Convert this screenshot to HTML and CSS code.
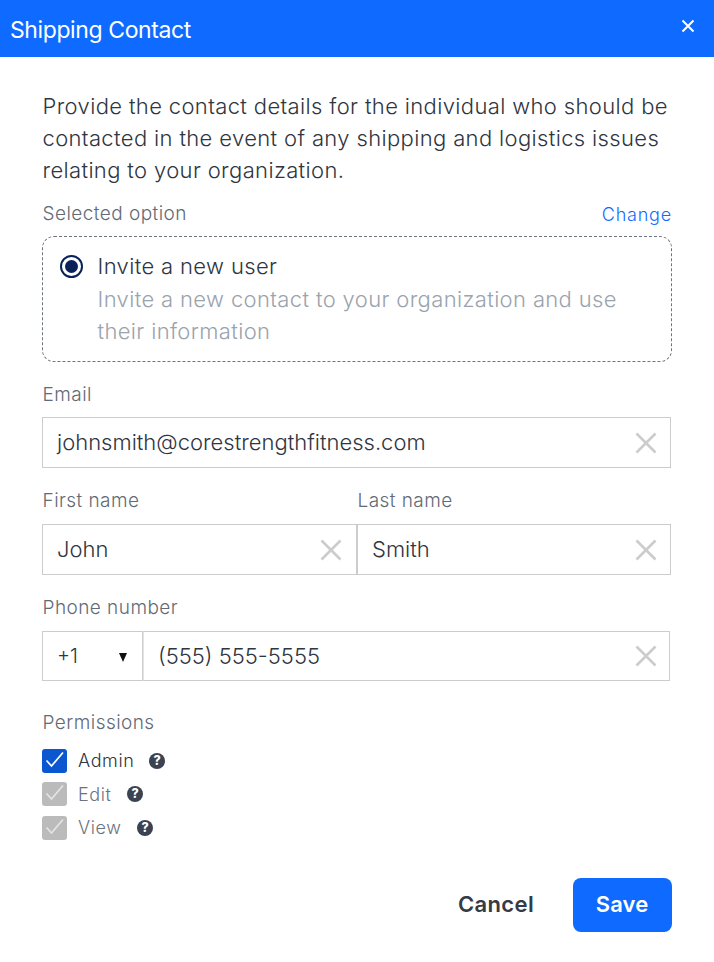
FILE: index.html
```html
<!DOCTYPE html>
<html lang="en">
<head>
<meta charset="utf-8">
<title>Shipping Contact</title>
<link rel="stylesheet" href="styles.css">
</head>
<body>
<div class="dialog">
  <header class="header">
    <h1 class="title">Shipping Contact</h1>
    <svg class="close" viewBox="0 0 14 14" width="14" height="14"><path d="M1.5 1.5 12.5 12.5M12.5 1.5 1.5 12.5" stroke="#fff" stroke-width="2" fill="none"/></svg>
  </header>
  <main class="content">
    <p class="intro">Provide the contact details for the individual who should be contacted in the event of any shipping and logistics issues relating to your organization.</p>
    <div class="selected-head">
      <span class="label">Selected option</span>
      <a class="change">Change</a>
    </div>
    <div class="option">
      <span class="radio"><span class="radio-dot"></span></span>
      <div class="option-text">
        <div class="option-title">Invite a new user</div>
        <div class="option-desc">Invite a new contact to your organization and use their information</div>
      </div>
    </div>
    <div class="field field-email">
      <div class="label">Email</div>
      <div class="input">
        <span class="value">johnsmith@corestrengthfitness.com</span>
        <svg class="clear" viewBox="0 0 22 22" width="22" height="22"><path d="M1.5 1.5 20.5 20.5M20.5 1.5 1.5 20.5" stroke="#ccc" stroke-width="2.6" fill="none"/></svg>
      </div>
    </div>
    <div class="name-row">
      <div class="field name-first">
        <div class="label">First name</div>
        <div class="input">
          <span class="value">John</span>
          <svg class="clear" viewBox="0 0 22 22" width="22" height="22"><path d="M1.5 1.5 20.5 20.5M20.5 1.5 1.5 20.5" stroke="#ccc" stroke-width="2.6" fill="none"/></svg>
        </div>
      </div>
      <div class="field name-last">
        <div class="label">Last name</div>
        <div class="input">
          <span class="value">Smith</span>
          <svg class="clear" viewBox="0 0 22 22" width="22" height="22"><path d="M1.5 1.5 20.5 20.5M20.5 1.5 1.5 20.5" stroke="#ccc" stroke-width="2.6" fill="none"/></svg>
        </div>
      </div>
    </div>
    <div class="field field-phone">
      <div class="label">Phone number</div>
      <div class="phone-row">
        <div class="code"><span class="code-value">+1</span><span class="caret"></span></div>
        <div class="input phone-input">
          <span class="value">(555) 555-5555</span>
          <svg class="clear" viewBox="0 0 22 22" width="22" height="22"><path d="M1.5 1.5 20.5 20.5M20.5 1.5 1.5 20.5" stroke="#ccc" stroke-width="2.6" fill="none"/></svg>
        </div>
      </div>
    </div>
    <div class="permissions">
      <div class="label">Permissions</div>
      <div class="perm-list">
        <div class="perm">
          <span class="check check-on"><svg viewBox="0 0 25 24" width="25" height="24"><path class="tick" d="M4.5 11.5 9.5 17 21 3.5" fill="none"/></svg></span>
          <span class="perm-name perm-name-on">Admin</span>
          <svg class="help" viewBox="0 0 16 16" width="16" height="16"><circle cx="8" cy="8" r="8" fill="#3b4352"/><text x="8" y="12.4" text-anchor="middle" class="help-mark">?</text></svg>
        </div>
        <div class="perm">
          <span class="check"><svg viewBox="0 0 25 24" width="25" height="24"><path class="tick" d="M4.5 11.5 9.5 17 21 3.5" fill="none"/></svg></span>
          <span class="perm-name">Edit</span>
          <svg class="help" viewBox="0 0 16 16" width="16" height="16"><circle cx="8" cy="8" r="8" fill="#3b4352"/><text x="8" y="12.4" text-anchor="middle" class="help-mark">?</text></svg>
        </div>
        <div class="perm">
          <span class="check"><svg viewBox="0 0 25 24" width="25" height="24"><path class="tick" d="M4.5 11.5 9.5 17 21 3.5" fill="none"/></svg></span>
          <span class="perm-name">View</span>
          <svg class="help" viewBox="0 0 16 16" width="16" height="16"><circle cx="8" cy="8" r="8" fill="#3b4352"/><text x="8" y="12.4" text-anchor="middle" class="help-mark">?</text></svg>
        </div>
      </div>
    </div>
    <div class="actions">
      <button class="btn btn-cancel">Cancel</button>
      <button class="btn btn-save">Save</button>
    </div>
  </main>
</div>
</body>
</html>
```
FILE: styles.css
```css
* { box-sizing: border-box; }
html, body { margin: 0; padding: 0; background: #fff; }
body { font-family: Inter, "Liberation Sans", sans-serif; color: #2f3541; overflow: hidden; }
.dialog { width: 714px; height: 962px; }
.header { height: 57px; background: #0f6bff; display: flex; align-items: flex-start; justify-content: space-between; padding: 0 19px 0 10px; }
.title { margin: 0; font-size: 23px; line-height: 60px; font-weight: 400; letter-spacing: -0.4px; color: #fff; }
.close { margin-top: 19px; }
.content { padding: 33px 42px 0 42px; }
.intro { margin: 0; padding-left: 0.5px; font-size: 22px; line-height: 32px; letter-spacing: 0.36px; font-weight: 350; color: #2f3541; width: 640px; }
.label { padding-left: 0.5px; font-size: 19px; line-height: 22px; letter-spacing: 0.45px; font-weight: 350; color: #626a76; }
.selected-head { display: flex; justify-content: space-between; align-items: flex-end; margin-top: 15px; height: 24px; }
.selected-head .label { line-height: 22px; }
.change { font-size: 18px; line-height: 22px; letter-spacing: 0.8px; font-weight: 350; margin-bottom: -1px; color: #0f6bff; }
.option { display: flex; margin-top: 11px; width: 630px; height: 126px; border: 1px dashed #6e7580; border-radius: 12px; padding: 13px 16px 14px 17px; gap: 14.5px; }
.radio { flex: none; width: 23px; height: 23px; margin-top: 5px; border: 2px solid #0a2259; border-radius: 50%; display: flex; align-items: center; justify-content: center; }
.radio-dot { width: 13px; height: 13px; border-radius: 50%; background: #0a2259; }
.option-title { font-size: 22px; line-height: 33px; letter-spacing: 0.36px; font-weight: 350; color: #2f3541; }
.option-desc { font-size: 22px; line-height: 32px; letter-spacing: 0.36px; font-weight: 350; color: #9aa3ae; width: 535px; }
.field-email { margin-top: 22px; }
.input { height: 51px; border: 1px solid #ccc; display: flex; align-items: center; justify-content: space-between; padding: 0 14px; }
.value { font-size: 22px; line-height: 26px; margin-top: -1px; font-weight: 350; color: #2f3541; }
.field .label { margin-bottom: 11px; }
.field-email .input { width: 629px; padding-right: 13px; }
.name-row { display: flex; margin-top: 22px; }
.name-first { width: 315px; }
.name-last { width: 314px; }
.name-last .input { padding-right: 13px; }
.name-row .label { margin-bottom: 12px; }
.field-phone { margin-top: 22px; }
.field-phone .label { margin-bottom: 12px; }
.phone-row { display: flex; }
.code { width: 101px; height: 50px; border: 1px solid #ccc; display: flex; align-items: center; justify-content: space-between; padding: 0 15px 0 14px; font-size: 20px; font-weight: 350; }
.caret { width: 0; height: 0; border-left: 4.5px solid transparent; border-right: 4.5px solid transparent; border-top: 9px solid #111; margin-top: 3px; }
.phone-input { width: 527px; height: 50px; border-left-color: #e4e4e4; padding-right: 12px; }
.permissions { margin-top: 31px; }
.perm-list { margin-top: 10px; }
.perm { display: flex; align-items: center; height: 33.5px; }
.check { flex: none; width: 25px; height: 24px; border-radius: 3px; background: #bbb; display: block; }
.check svg { display: block; }
.tick { stroke: #e4e4e4; stroke-width: 1.7; }
.check-on { background: #0b57d0; }
.check-on .tick { stroke: #fff; }
.perm-name { font-size: 18px; letter-spacing: 0.6px; font-weight: 350; color: #6b7280; margin-left: 11px; margin-right: 15px; }
.perm-name-on { color: #2f3541; }
.help { flex: none; }
.help-mark { font-family: Inter, sans-serif; font-size: 12.5px; font-weight: 800; fill: #fff; }
.actions { display: flex; justify-content: flex-end; align-items: center; width: 630px; margin-top: 33px; gap: 39px; }
.btn { font-family: Inter, sans-serif; font-size: 22px; line-height: 26px; font-weight: 600; border: 0; background: none; padding: 0; cursor: pointer; }
.btn-cancel { color: #343a46; letter-spacing: 0.35px; margin-top: -2px; }
.btn-save { width: 99px; height: 54px; padding: 0 1px 2px 0; border-radius: 8px; background: #0f6bff; color: #fff; letter-spacing: 0.1px; }
```
